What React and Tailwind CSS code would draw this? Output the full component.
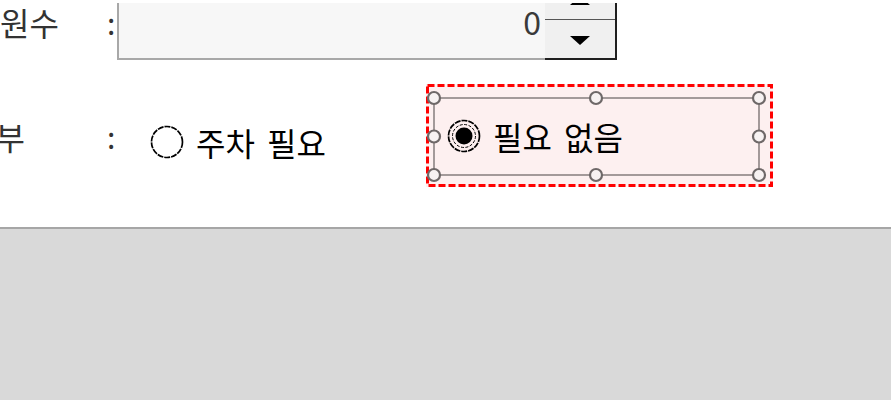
const handles = [
  [8, 14], [170, 14], [333, 14],
  [8, 52.5], [333, 52.5],
  [8, 91], [170, 91], [333, 91],
];

const Radio = ({ checked }) => (
  <svg width="34" height="34" viewBox="0 0 34 34" className="shrink-0">
    <circle cx="17" cy="17" r="15.5" fill="none" stroke="#000" strokeWidth="1.7" strokeDasharray="6 1" />
    {checked && (
      <>
        <circle cx="17" cy="17" r="11.5" fill="none" stroke="#000" strokeWidth="1" strokeDasharray="3 1.5" />
        <circle cx="17" cy="17" r="8.5" fill="#000" />
      </>
    )}
  </svg>
);

const Label = ({ text, pr }) => (
  <div className={`w-[107px] shrink-0 flex justify-end whitespace-nowrap text-[32px] leading-none text-[#333] ${pr}`}>
    {text}
  </div>
);

export default function App() {
  return (
    <div className="w-[891px] h-[400px] overflow-hidden bg-white flex flex-col font-['Noto_Sans_CJK_KR','Noto_Sans',sans-serif]">
      <div className="h-[227px] shrink-0 flex flex-col pt-[3px]">
        {/* 인원수 */}
        <div className="h-[57px] flex items-start">
          <div className="h-[37px] flex items-center">
            <Label text="인원수" pr="pr-[48px]" />
            <span className="w-[10px] text-[30px] leading-none text-[#333]">:</span>
          </div>
          <div className="w-[428px] h-[57px] bg-[#f7f7f7] border-l-2 border-b-2 border-[#a8a8a8] flex items-start justify-end pr-[4px] pt-[1px] text-[32px] leading-none text-[#3a3a3a]">
            <span className="h-[34px] flex items-center">0</span>
          </div>
          <div className="w-[72px] h-[57px] bg-[#f0f0f0] border-r-2 border-b-2 border-[#1f1f1f] flex flex-col">
            <div className="h-[17px] overflow-hidden flex items-start justify-center border-b border-[#555]">
              <svg width="20" height="9" viewBox="0 0 20 9" className="-mt-[7px] shrink-0"><path d="M10 0 L20 9 L0 9 Z" fill="#000" /></svg>
            </div>
            <div className="flex-1 flex items-center justify-center pt-[2px]">
              <svg width="20" height="9" viewBox="0 0 20 9"><path d="M0 0 L20 0 L10 9 Z" fill="#000" /></svg>
            </div>
          </div>
        </div>

        {/* 주차 여부 */}
        <div className="mt-[24px] h-[103px] flex items-center">
          <Label text="여부" pr="pr-[82px]" />
          <span className="w-[10px] text-[30px] leading-none text-[#333]">:</span>
          <div className="ml-[33px] w-[276px] flex items-center gap-[12px] mt-[12px] text-[32px] leading-none text-black [word-spacing:5px]">
            <Radio />
            <span>주차 필요</span>
          </div>
          <div className="relative w-[347px] h-[103px] bg-[#fdf0f0] flex items-center pl-[21px] gap-[12px] text-[32px] leading-none text-black [word-spacing:5px]">
            <svg className="absolute inset-0" width="347" height="103" viewBox="0 0 347 103">
              <rect x="1.5" y="1.5" width="344" height="100" fill="none" stroke="#ff0000" strokeWidth="3" strokeDasharray="7 3" />
              <rect x="8" y="14" width="325" height="77" fill="none" stroke="#857d7d" strokeWidth="1.5" />
              {handles.map(([cx, cy], i) => (
                <circle key={i} cx={cx} cy={cy} r="6" fill="#f7f2f2" stroke="#6e6868" strokeWidth="2.2" />
              ))}
            </svg>
            <span className="relative"><Radio checked /></span>
            <span className="relative">필요 없음</span>
          </div>
        </div>
      </div>
      <div className="flex-1 bg-[#d9d9d9] border-t-2 border-[#a6a6a6]" />
    </div>
  );
}
